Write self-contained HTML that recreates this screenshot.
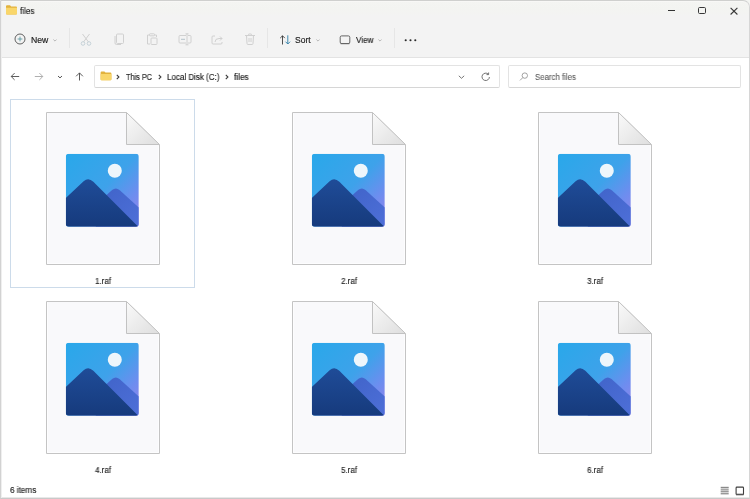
<!DOCTYPE html>
<html><head><meta charset="utf-8">
<style>
*{margin:0;padding:0;box-sizing:border-box}
html,body{width:750px;height:499px;overflow:hidden;background:#fff}
body{position:relative;font-family:"Liberation Sans",sans-serif;color:#1a1a1a;font-variant-ligatures:none}
.a{position:absolute}
.t{position:absolute;white-space:nowrap;line-height:1;transform-origin:0 0;-webkit-text-stroke:0.15px currentColor;will-change:transform}
#top{left:0;top:0;width:750px;height:58px;background:#f3f3f3;border-bottom:1px solid #e3e3e3}
#wb{left:0;top:0;width:750px;height:499px;border:1px solid #d2d2d2;border-top-color:#cfd0ce;border-right-color:#d6d6d6;border-bottom-color:#c9c9c9;border-radius:0 7px 0 0;box-shadow:inset 1px 0 0 #efefef, inset 0 -1px 0 #e8e8e8, inset 0 1px 0 #f8f8f6;pointer-events:none}
.ib{left:0;top:0}
.box{border:1px solid #e3e3e3;border-bottom-color:#d6d6d6;background:#fff;border-radius:2px}
.sep{width:1px;background:#e6e6e6}
.lbl{font-size:8.5px;transform:scaleX(0.93);text-align:center;width:60px;transform-origin:50% 0}
</style></head><body>
<div id="top" class="a"></div>
<div class="a" style="left:0;top:0;width:750px;height:16px;background:linear-gradient(#f4f5f2,#f3f4f1 60%,#f3f3f3)"></div>

<!-- title -->
<svg class="a" style="left:5px;top:4px" width="13" height="12" viewBox="0 0 13 12">
  <path d="M1 2.2 Q1 1.2 2 1.2 H5 L6.2 2.4 H11 Q12 2.4 12 3.4 V9.5 Q12 10.5 11 10.5 H2 Q1 10.5 1 9.5Z" fill="#e2b23c"/>
  <path d="M1 3.7 H12 V9.5 Q12 10.5 11 10.5 H2 Q1 10.5 1 9.5Z" fill="#f9d66a"/>
</svg>
<div class="t" style="left:19.7px;top:7px;font-size:9px;transform:scaleX(0.9);color:#1b1b1b">files</div>

<!-- window controls -->
<div class="a" style="left:668px;top:10px;width:7px;height:1px;background:#333"></div>
<div class="a" style="left:698.4px;top:7px;width:7.6px;height:7.2px;border:1.3px solid #383838;border-radius:1.6px"></div>
<svg class="a" style="left:728.5px;top:5.6px" width="10" height="10" viewBox="0 0 10 10"><path d="M1.6 1.8 L8.4 8.5 M8.4 1.8 L1.6 8.5" stroke="#383838" stroke-width="1.1"/></svg>

<!-- toolbar -->
<svg class="a" style="left:14px;top:33px" width="12" height="12" viewBox="0 0 12 12">
  <circle cx="6" cy="6" r="5" fill="none" stroke="#505050" stroke-width="0.9"/>
  <path d="M6 3.6 V8.4 M3.6 6 H8.4" stroke="#4f9199" stroke-width="0.8"/>
</svg>
<div class="t" style="left:30.6px;top:36.3px;font-size:8.5px;transform:scaleX(1.02);color:#1a1a1a">New</div>
<svg class="a" style="left:52.8px;top:38.6px" width="4" height="3" viewBox="0 0 4 3"><path d="M0.4 0.5 L2 2.1 L3.6 0.5" fill="none" stroke="#a8a8a8" stroke-width="0.8"/></svg>
<div class="a sep" style="left:69px;top:28px;height:20px"></div>

<!-- disabled icons -->
<svg class="a" style="left:80px;top:33px" width="12" height="13" viewBox="0 0 12 13">
  <path d="M2.5 1 L8.5 9 M9.5 1 L3.5 9" stroke="#d0d0d0" stroke-width="1" fill="none"/>
  <circle cx="3" cy="10.5" r="1.8" fill="none" stroke="#c5d2d8" stroke-width="1"/>
  <circle cx="9" cy="10.5" r="1.8" fill="none" stroke="#c5d2d8" stroke-width="1"/>
</svg>
<svg class="a" style="left:114px;top:33px" width="11" height="12" viewBox="0 0 11 12">
  <rect x="2.5" y="1" width="7" height="9.5" rx="1" fill="none" stroke="#d0d0d0" stroke-width="1"/>
  <path d="M1 3 V10 Q1 11.5 2.5 11.5 H7" fill="none" stroke="#d0d0d0" stroke-width="1"/>
</svg>
<svg class="a" style="left:146px;top:33px" width="12" height="12" viewBox="0 0 12 12">
  <path d="M3.5 2 H1.5 V11 H4" fill="none" stroke="#d0d0d0" stroke-width="1"/>
  <path d="M8.5 2 H10.5 V4" fill="none" stroke="#d0d0d0" stroke-width="1"/>
  <rect x="3.5" y="0.8" width="5" height="2" rx="0.6" fill="none" stroke="#d0d0d0" stroke-width="1"/>
  <rect x="5" y="5" width="6" height="6.5" rx="0.8" fill="none" stroke="#d0d0d0" stroke-width="1"/>
</svg>
<svg class="a" style="left:178px;top:33px" width="14" height="13" viewBox="0 0 14 13">
  <path d="M8 2.5 H2 Q1 2.5 1 3.5 V9 Q1 10 2 10 H8 M10 2.5 H12 Q13 2.5 13 3.5 V9 Q13 10 12 10 H10" fill="none" stroke="#d0d0d0" stroke-width="1"/>
  <path d="M9 0.8 V11.8 M7.5 0.8 H10.5 M7.5 11.8 H10.5" stroke="#d0d0d0" stroke-width="1"/>
  <path d="M3 6.3 H7" stroke="#b5c2ca" stroke-width="1"/>
</svg>
<svg class="a" style="left:211px;top:34px" width="13" height="11" viewBox="0 0 13 11">
  <path d="M4 2 H2 Q1 2 1 3 V9 Q1 10 2 10 H10 Q11 10 11 9 V8" fill="none" stroke="#d0d0d0" stroke-width="1"/>
  <path d="M4 8 Q4 4.5 8 4.5 H11 M9 2.5 L11 4.5 L9 6.5" fill="none" stroke="#d0d0d0" stroke-width="1"/>
</svg>
<svg class="a" style="left:244px;top:33px" width="12" height="12" viewBox="0 0 12 12">
  <path d="M1 2.5 H11 M4.5 2.5 V1.5 Q4.5 1 5 1 H7 Q7.5 1 7.5 1.5 V2.5 M2.5 2.5 L3 10.5 Q3 11.5 4 11.5 H8 Q9 11.5 9 10.5 L9.5 2.5 M5 5 V9 M7 5 V9" fill="none" stroke="#d0d0d0" stroke-width="1"/>
</svg>
<div class="a sep" style="left:267px;top:28px;height:20px"></div>

<svg class="a" style="left:279px;top:35px" width="13" height="10" viewBox="0 0 13 10">
  <path d="M3.5 9.5 V0.8 M1.2 3.1 L3.5 0.8 L5.8 3.1" fill="none" stroke="#3a3a3a" stroke-width="0.9"/>
  <path d="M8.8 0.3 V9 M6.5 6.7 L8.8 9 L11.1 6.7" fill="none" stroke="#2f7fa8" stroke-width="0.9"/>
</svg>
<div class="t" style="left:295px;top:36.3px;font-size:8.5px;transform:scaleX(1.001)">Sort</div>
<svg class="a" style="left:316px;top:38.6px" width="4" height="3" viewBox="0 0 4 3"><path d="M0.4 0.5 L2 2.1 L3.6 0.5" fill="none" stroke="#a8a8a8" stroke-width="0.8"/></svg>

<svg class="a" style="left:339px;top:35px" width="12" height="10" viewBox="0 0 12 10">
  <rect x="1.2" y="0.9" width="9.6" height="7.6" rx="1.4" fill="none" stroke="#555" stroke-width="0.9"/>
  <path d="M1.6 8.6 H10.4" stroke="#666" stroke-width="1.2"/>
</svg>
<div class="t" style="left:355.6px;top:36.3px;font-size:8.5px;transform:scaleX(0.95)">View</div>
<svg class="a" style="left:377.8px;top:38.6px" width="4" height="3" viewBox="0 0 4 3"><path d="M0.4 0.5 L2 2.1 L3.6 0.5" fill="none" stroke="#a8a8a8" stroke-width="0.8"/></svg>
<div class="a sep" style="left:394px;top:28px;height:20px"></div>
<svg class="a" style="left:403px;top:38px" width="15" height="4" viewBox="0 0 15 4">
  <circle cx="2.7" cy="2.2" r="1.05" fill="#2a2a2a"/><circle cx="7.5" cy="2.2" r="1.05" fill="#2a2a2a"/><circle cx="12.3" cy="2.2" r="1.05" fill="#2a2a2a"/>
</svg>

<!-- nav -->
<svg class="a" style="left:10px;top:71px" width="10" height="11" viewBox="0 0 10 11"><path d="M9.2 5.5 H1.3 M4.6 2.1 L1.2 5.5 L4.6 8.9" fill="none" stroke="#4a4a4a" stroke-width="0.9"/></svg>
<svg class="a" style="left:34px;top:71px" width="10" height="11" viewBox="0 0 10 11"><path d="M0.8 5.5 H8.7 M5.4 2.1 L8.8 5.5 L5.4 8.9" fill="none" stroke="#a6a6a6" stroke-width="0.9"/></svg>
<svg class="a" style="left:57px;top:74.5px" width="6" height="4" viewBox="0 0 6 4"><path d="M1 1 L3 2.9 L5 1" fill="none" stroke="#555" stroke-width="1"/></svg>
<svg class="a" style="left:74px;top:72px" width="10" height="9" viewBox="0 0 10 9"><path d="M5.5 8.5 V0.9 M2.1 4.3 L5.5 0.9 L8.9 4.3" fill="none" stroke="#4a4a4a" stroke-width="0.9"/></svg>

<div class="a box" style="left:94px;top:65px;width:406px;height:23px"></div>
<svg class="a" style="left:99.5px;top:70.5px" width="12" height="10" viewBox="0 0 12 10">
  <path d="M0.6 1.6 Q0.6 0.5 1.6 0.5 H4.4 L5.5 1.6 H10.4 Q11.4 1.6 11.4 2.6 V8.2 Q11.4 9.2 10.4 9.2 H1.6 Q0.6 9.2 0.6 8.2Z" fill="#e2b23c"/>
  <path d="M0.6 2.9 H11.4 V8.2 Q11.4 9.2 10.4 9.2 H1.6 Q0.6 9.2 0.6 8.2Z" fill="#f9d66a"/>
</svg>
<svg class="a" style="left:115.5px;top:73.5px" width="4" height="6" viewBox="0 0 4 6"><path d="M0.8 0.9 L2.9 3 L0.8 5.1" fill="none" stroke="#3c3c3c" stroke-width="1.1"/></svg>
<div class="t" style="left:126px;top:72.6px;font-size:8.5px;transform:scaleX(0.86)">This PC</div>
<svg class="a" style="left:157.5px;top:73.5px" width="4" height="6" viewBox="0 0 4 6"><path d="M0.8 0.9 L2.9 3 L0.8 5.1" fill="none" stroke="#3c3c3c" stroke-width="1.1"/></svg>
<div class="t" style="left:166.8px;top:72.6px;font-size:8.5px;transform:scaleX(0.94)">Local Disk (C:)</div>
<svg class="a" style="left:224.5px;top:73.5px" width="4" height="6" viewBox="0 0 4 6"><path d="M0.8 0.9 L2.9 3 L0.8 5.1" fill="none" stroke="#3c3c3c" stroke-width="1.1"/></svg>
<div class="t" style="left:234.2px;top:72.8px;font-size:8.5px;transform:scaleX(0.97)">files</div>
<svg class="a" style="left:457.5px;top:74.5px" width="7" height="4" viewBox="0 0 7 4"><path d="M0.8 0.8 L3.5 3.3 L6.2 0.8" fill="none" stroke="#666" stroke-width="0.9"/></svg>
<svg class="a" style="left:481px;top:72px" width="10" height="10" viewBox="0 0 10 10"><path d="M8.4 5 A3.7 3.7 0 1 1 7.2 2.1 M7.6 0.5 V2.6 H5.5" fill="none" stroke="#5a5a5a" stroke-width="0.85"/></svg>

<div class="a box" style="left:508px;top:65px;width:233px;height:23px"></div>
<svg class="a" style="left:518.5px;top:72px" width="10" height="9" viewBox="0 0 10 9"><circle cx="5.8" cy="3.6" r="2.7" fill="none" stroke="#8a8a8a" stroke-width="0.8"/><path d="M3.8 5.6 L1 8.4" stroke="#8a8a8a" stroke-width="0.8"/></svg>
<div class="t" style="left:535px;top:73.2px;font-size:8.5px;transform:scaleX(0.92);color:#5a5a5a;-webkit-text-stroke:0.1px #5a5a5a">Search files</div>

<!-- items -->
<div class="a" style="left:10px;top:99px;width:185px;height:189px;border:1px solid #ccdbea"></div>
<svg width="0" height="0" style="position:absolute"><defs>
<linearGradient id="bg" x1="0" y1="0" x2="1" y2="1"><stop offset="0" stop-color="#29a8ea"/><stop offset="0.5" stop-color="#3ea2ea"/><stop offset="0.75" stop-color="#6e8def"/><stop offset="1" stop-color="#9a82ea"/></linearGradient>
<linearGradient id="mb" x1="0" y1="0" x2="0" y2="1"><stop offset="0" stop-color="#1f4c98"/><stop offset="1" stop-color="#163a7c"/></linearGradient>
<linearGradient id="ms" x1="0" y1="0" x2="1" y2="1"><stop offset="0" stop-color="#3f63c8"/><stop offset="1" stop-color="#4e6fd8"/></linearGradient>
<linearGradient id="fd" x1="0" y1="0" x2="1" y2="1"><stop offset="0" stop-color="#fafafa"/><stop offset="1" stop-color="#dedede"/></linearGradient>
<clipPath id="ic"><rect x="0" y="0" width="73" height="73" rx="3"/></clipPath>
<symbol id="file" viewBox="0 0 115 154" width="115" height="154">
<path d="M0.5 0.5 H80.5 L113.5 33 V152.5 H0.5 Z" fill="#f9f9fb" stroke="#c4c4c4" stroke-width="1"/>
<path d="M1.5 1.5 V151.5 H112.5 V34" fill="none" stroke="#fdfdfe" stroke-width="1"/>
<path d="M80.5 0.5 V32.5 H113.5 Z" fill="url(#fd)" stroke="#c2c2c2" stroke-width="1" stroke-linejoin="round"/>
<g transform="translate(19.8 41.8)">
<g clip-path="url(#ic)">
<rect width="73" height="73" fill="url(#bg)"/>
<circle cx="49" cy="17" r="7" fill="#eef6fb"/>
<path d="M30 51 L46.3 36.3 Q50 33 53.7 36.3 L73 53.7 V73 H30 Z" fill="url(#ms)"/>
<path d="M0 44.1 L17.8 27.55 Q22.6 23.1 27.55 28.05 L73 73.5 V73 H0 Z" fill="url(#mb)"/>
</g></g>
</symbol></defs></svg>
<svg class="a" style="left:46px;top:112px" width="115" height="154"><use href="#file"/></svg>
<div class="t lbl" style="left:72.5px;top:277.4px">1.raf</div>
<svg class="a" style="left:292px;top:112px" width="115" height="154"><use href="#file"/></svg>
<div class="t lbl" style="left:318.5px;top:277.4px">2.raf</div>
<svg class="a" style="left:538px;top:112px" width="115" height="154"><use href="#file"/></svg>
<div class="t lbl" style="left:564.5px;top:277.4px">3.raf</div>
<svg class="a" style="left:46px;top:300.5px" width="115" height="154"><use href="#file"/></svg>
<div class="t lbl" style="left:72.5px;top:466.2px">4.raf</div>
<svg class="a" style="left:292px;top:300.5px" width="115" height="154"><use href="#file"/></svg>
<div class="t lbl" style="left:318.5px;top:466.2px">5.raf</div>
<svg class="a" style="left:538px;top:300.5px" width="115" height="154"><use href="#file"/></svg>
<div class="t lbl" style="left:564.5px;top:466.2px">6.raf</div>


<!-- status -->
<div class="t" style="left:10px;top:486px;font-size:8.5px;transform:scaleX(0.96);color:#222">6 items</div>
<svg class="a" style="left:719.5px;top:485.5px" width="10" height="9" viewBox="0 0 10 9">
  <path d="M0.7 1.6 H8.7" stroke="#8a8a8a" stroke-width="1.6"/>
  <path d="M0.7 3.9 H8.7 M0.7 5.8 H8.7 M0.7 7.8 H8.7" stroke="#5e5e5e" stroke-width="0.9"/>
</svg>
<svg class="a" style="left:734.5px;top:485.5px" width="10" height="10" viewBox="0 0 10 10">
  <rect x="1.1" y="1.1" width="7.4" height="7.4" rx="0.8" fill="none" stroke="#3e3e3e" stroke-width="1.1"/>
  <path d="M1 8.5 H8.6" stroke="#555" stroke-width="1.6"/>
</svg>

<div id="wb" class="a"></div>

<script>
</script>
</body></html>
